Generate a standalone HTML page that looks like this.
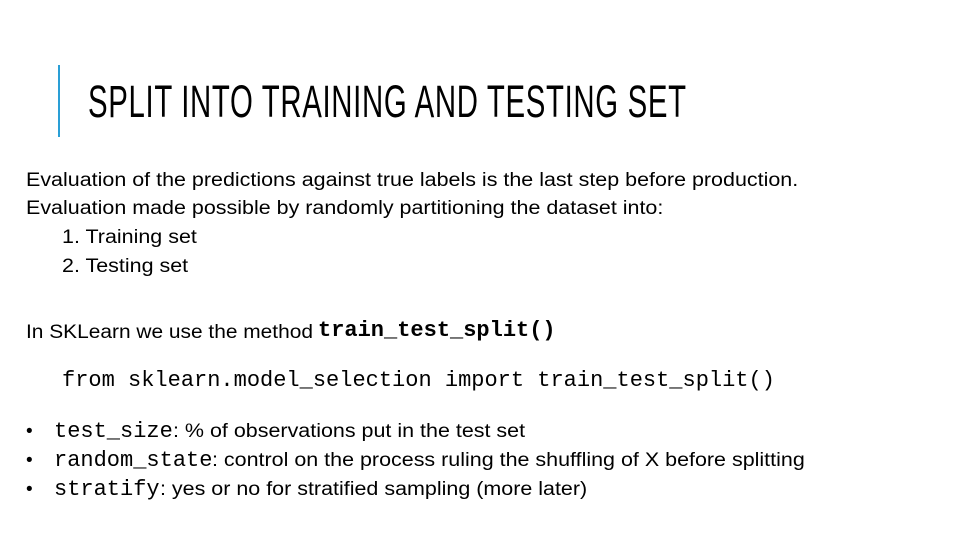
<!DOCTYPE html>
<html><head><meta charset="utf-8"><style>
body{margin:0;width:960px;height:540px;background:#fff;position:relative;overflow:hidden;font-family:"Liberation Sans",sans-serif;color:#000}
.a{position:absolute;white-space:nowrap;transform-origin:0 0}
.t{font-size:19px;transform:scaleX(1.13)}
.m{font-family:"Liberation Mono",monospace}
</style></head><body>
<div style="position:absolute;left:58px;top:65px;width:2px;height:72px;background:#2a9fd6"></div>
<div class="a" style="left:88px;top:76px;font-size:45px;transform:scaleX(0.653);letter-spacing:1px">SPLIT INTO TRAINING AND TESTING SET</div>
<div class="a t" style="left:26px;top:170px">Evaluation of the predictions against true labels is the last step before production.</div>
<div class="a t" style="left:26px;top:198px">Evaluation made possible by randomly partitioning the dataset into:</div>
<div class="a t" style="left:62px;top:227px">1. Training set</div>
<div class="a t" style="left:62px;top:256px">2. Testing set</div>
<div class="a t" style="left:26px;top:322px;transform:scaleX(1.1)">In SKLearn we use the method</div>
<div class="a m" style="left:318px;top:318px;font-size:22px;font-weight:bold">train_test_split()</div>
<div class="a m" style="left:62px;top:368px;font-size:22px">from sklearn.model_selection import train_test_split()</div>
<div class="a" style="left:26px;top:421px;font-size:19px">•</div>
<div class="a" style="left:26px;top:450px;font-size:19px">•</div>
<div class="a" style="left:26px;top:479px;font-size:19px">•</div>
<div class="a m" style="left:54px;top:419px;font-size:22px">test_size</div>
<div class="a m" style="left:54px;top:448px;font-size:22px">random_state</div>
<div class="a m" style="left:54px;top:477px;font-size:22px">stratify</div>
<div class="a t" style="left:173px;top:421px">: % of observations put in the test set</div>
<div class="a t" style="left:212px;top:450px">: control on the process ruling the shuffling of X before splitting</div>
<div class="a t" style="left:160px;top:479px">: yes or no for stratified sampling (more later)</div>
</body></html>
